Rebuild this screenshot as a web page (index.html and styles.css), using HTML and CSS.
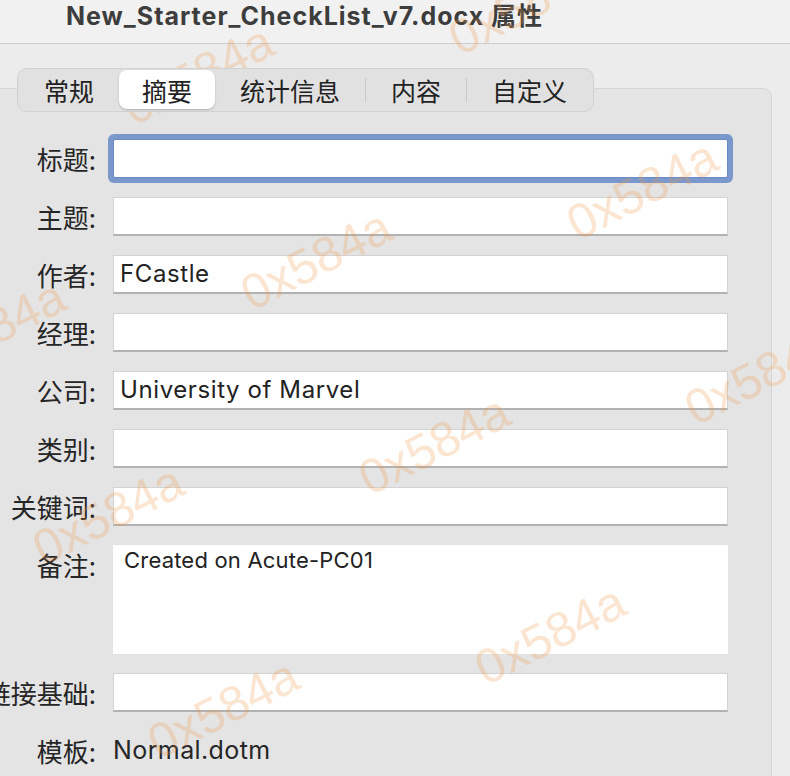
FILE: index.html
```html
<!DOCTYPE html>
<html lang="zh-CN">
<head>
<meta charset="utf-8">
<title>New_Starter_CheckList_v7.docx 属性</title>
<link rel="stylesheet" href="styles.css">
</head>
<body>
<div class="window">
  <header class="titlebar">
    <h1 class="title">New_Starter_CheckList_v7.docx 属性</h1>
  </header>
  <main class="content">
    <nav class="tabs">
      <span class="tab">常规</span>
      <span class="tab selected">摘要</span>
      <span class="tab">统计信息</span>
      <span class="sep"></span>
      <span class="tab">内容</span>
      <span class="sep"></span>
      <span class="tab">自定义</span>
    </nav>
    <section class="panel">
      <form class="form">
        <label class="label">标题:</label>
        <div class="field focused"></div>
        <label class="label">主题:</label>
        <div class="field"></div>
        <label class="label">作者:</label>
        <div class="field">FCastle</div>
        <label class="label">经理:</label>
        <div class="field"></div>
        <label class="label">公司:</label>
        <div class="field">University of Marvel</div>
        <label class="label">类别:</label>
        <div class="field"></div>
        <label class="label">关键词:</label>
        <div class="field"></div>
        <label class="label">备注:</label>
        <div class="field area">Created on Acute-PC01</div>
        <label class="label">链接基础:</label>
        <div class="field"></div>
        <label class="label">模板:</label>
        <div class="value">Normal.dotm</div>
      </form>
    </section>
  </main>
  <div class="watermarks" aria-hidden="true">
    <span class="wm" style="left:135px;top:128px">0x584a</span>
    <span class="wm" style="left:461px;top:58px">0x584a</span>
    <span class="wm" style="left:579px;top:243px">0x584a</span>
    <span class="wm" style="left:253px;top:313px">0x584a</span>
    <span class="wm" style="left:-73px;top:383px">0x584a</span>
    <span class="wm" style="left:697px;top:428px">0x584a</span>
    <span class="wm" style="left:371px;top:498px">0x584a</span>
    <span class="wm" style="left:45px;top:568px">0x584a</span>
    <span class="wm" style="left:487px;top:688px">0x584a</span>
    <span class="wm" style="left:160px;top:762px">0x584a</span>
  </div>
</div>
</body>
</html>
```

FILE: styles.css
```css
* { box-sizing: border-box; }

html, body {
  margin: 0;
  padding: 0;
  background: #ececec;
  overflow: hidden;
}

.window {
  position: relative;
  width: 790px;
  height: 776px;
  overflow: hidden;
  background: #ececec;
  font-family: "Noto Sans CJK SC", "Inter", sans-serif;
  color: #262626;
}

.titlebar {
  height: 44px;
  background: #f1f1f1;
  border-bottom: 1px solid #cdcdcd;
  padding-left: 66px;
}

.title {
  margin: 0;
  font-family: "Inter", "Noto Sans CJK SC", sans-serif;
  font-weight: 700;
  font-size: 25px;
  line-height: 32px;
  color: #3d3d3d;
  letter-spacing: 1px;
}

.content {
  padding-top: 24px;
}

.tabs {
  position: relative;
  z-index: 1;
  display: flex;
  width: max-content;
  align-items: center;
  margin-left: 17px;
  margin-bottom: -24px;
  height: 44px;
  padding: 1px 1px 2px 1px;
  background: #e1e1e1;
  border: 1px solid #d2d2d2;
  border-radius: 10px;
}

.tab {
  display: flex;
  align-items: center;
  justify-content: center;
  height: 39px;
  padding: 0 25px;
  font-size: 25px;
  color: #222;
  border-radius: 8px;
}

.tab.selected {
  background: #fff;
  box-shadow: 0 1px 2px rgba(0, 0, 0, 0.22);
  padding: 0 23px;
}

.sep {
  width: 1px;
  height: 24px;
  background: #c9c9c9;
}

.panel {
  margin-left: -10px;
  width: 782px;
  height: 720px;
  background: #e4e4e4;
  border: 1px solid #d6d6d6;
  border-radius: 9px;
  padding-top: 50px;
}

.form {
  display: grid;
  grid-template-columns: 105px 615px;
  column-gap: 17px;
  row-gap: 19px;
  margin: 0;
}

.label {
  display: flex;
  justify-content: flex-end;
  align-items: center;
  height: 39px;
  font-size: 26px;
  white-space: nowrap;
  color: #262626;
}

.field {
  height: 39px;
  background: #fff;
  border: 1px solid #d3d3d3;
  border-bottom: 2px solid #b2b2b2;
  padding-left: 6px;
  font-family: "Inter", "Noto Sans CJK SC", sans-serif;
  font-size: 24px;
  letter-spacing: 0.6px;
  line-height: 36px;
  color: #222;
}

.field.focused {
  border: 1px solid #6b8ac3;
  border-radius: 2px;
  box-shadow: 0 0 0 5px #7b98cd;
}

.field.area {
  height: 109px;
  border: none;
  padding: 0 0 0 11px;
  font-size: 22px;
  letter-spacing: 0.2px;
  line-height: 30px;
}

.value {
  height: 39px;
  line-height: 39px;
  font-family: "Inter", "Noto Sans CJK SC", sans-serif;
  font-size: 25px;
  letter-spacing: 0.4px;
  color: #262626;
}

.watermarks {
  position: absolute;
  inset: 0;
  pointer-events: none;
}

.wm {
  position: absolute;
  display: block;
  font-family: "Liberation Sans", sans-serif;
  font-size: 49px;
  line-height: 49px;
  margin-top: -43px;
  color: rgba(240, 150, 70, 0.25);
  transform-origin: 0 43px;
  transform: rotate(-27deg);
  white-space: nowrap;
}
```
